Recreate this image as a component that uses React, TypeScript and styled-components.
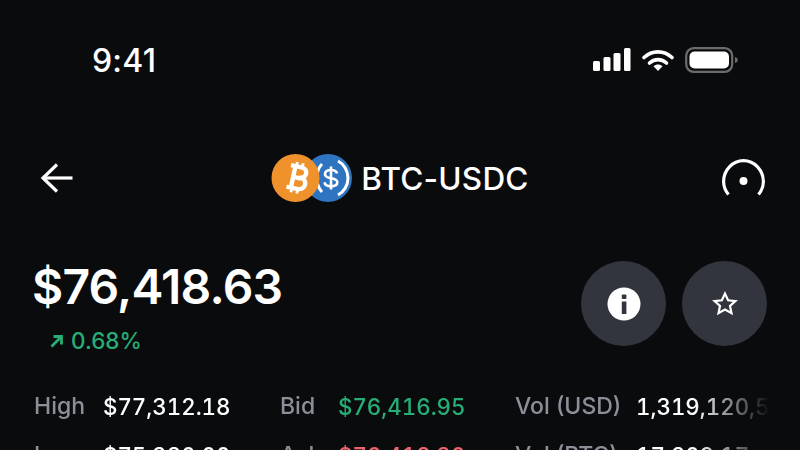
import { Fragment } from "react";
import styled, { createGlobalStyle } from "styled-components";

const GlobalStyle = createGlobalStyle`
  html, body {
    margin: 0;
    padding: 0;
    width: 800px;
    height: 450px;
    overflow: hidden;
    background: #0a0b0d;
    font-family: Inter, "Liberation Sans", sans-serif;
  }
`;

const Screen = styled.div`
  width: 800px;
  height: 450px;
  overflow: hidden;
  background: #0a0b0d;
  color: #ffffff;
  display: flex;
  flex-direction: column;
  & > * {
    flex-shrink: 0;
  }
`;

const StatusBar = styled.div`
  height: 40px;
  margin-top: 40px;
  padding: 0 62px 0 92px;
  display: flex;
  justify-content: space-between;
  align-items: center;
`;

const Clock = styled.span`
  font-size: 32px;
  font-weight: 500;
  letter-spacing: 0.2px;
`;

const StatusIcons = styled.div`
  display: flex;
  align-items: center;
  gap: 11px;
`;

const NavBar = styled.div`
  height: 60px;
  margin-top: 68px;
  padding: 0 35px 0 39px;
  display: flex;
  justify-content: space-between;
  align-items: center;
`;

const Pair = styled.div`
  display: flex;
  align-items: center;
  gap: 9px;
  margin-left: 5px;
`;

const PairLogos = styled.div`
  display: flex;
  align-items: center;
`;

const PairName = styled.span`
  font-size: 31.5px;
  font-weight: 500;
  letter-spacing: 0.2px;
`;

const PriceRow = styled.div`
  margin-top: 53px;
  padding: 0 33px 0 32px;
  display: flex;
  justify-content: space-between;
  align-items: flex-start;
`;

const PriceBlock = styled.div`
  display: flex;
  flex-direction: column;
`;

const Price = styled.div`
  font-size: 48px;
  line-height: 52px;
  font-weight: 600;
  letter-spacing: -0.8px;
`;

const Change = styled.div`
  margin-top: 15px;
  margin-left: 18px;
  display: flex;
  align-items: center;
  gap: 7px;
  color: #27ad75;
  font-size: 22.5px;
  line-height: 26px;
  font-weight: 500;
`;

const Actions = styled.div`
  display: flex;
  gap: 16px;
`;

const RoundButton = styled.div`
  width: 85px;
  height: 85px;
  border-radius: 50%;
  background: #32353d;
  display: flex;
  align-items: center;
  justify-content: center;
`;

const Stats = styled.div`
  margin-top: 38px;
  margin-left: 34px;
  width: 734px;
  display: grid;
  grid-template-columns: 69px 177px 58px 177px 121px 1fr;
  row-gap: 20px;
  line-height: 29px;
  font-weight: 500;
  white-space: nowrap;
  -webkit-mask-image: linear-gradient(to right, #000 660px, transparent 736px);
  mask-image: linear-gradient(to right, #000 660px, transparent 736px);
`;

const StatLabel = styled.span`
  color: #8a8f98;
  font-size: 23px;
`;

const StatValue = styled.span<{ $tone?: "up" | "down" }>`
  overflow: hidden;
  font-size: 22.3px;
  font-variant-numeric: tabular-nums;
  color: ${(p) =>
    p.$tone === "up" ? "#27ad75" : p.$tone === "down" ? "#f0616d" : "#ffffff"};
`;

const stats: { label: string; value: string; tone?: "up" | "down" }[] = [
  { label: "High", value: "$77,312.18" },
  { label: "Bid", value: "$76,416.95", tone: "up" },
  { label: "Vol (USD)", value: "1,319,120,5" },
  { label: "Low", value: "$75,380.00" },
  { label: "Ask", value: "$76,418.30", tone: "down" },
  { label: "Vol (BTC)", value: "17,209.17" },
];

function SignalIcon() {
  return (
    <svg width="38" height="24" viewBox="0 0 38 24" fill="#fff">
      <rect x="0" y="13" width="7" height="10" rx="1.5" />
      <rect x="10.5" y="9" width="7" height="14" rx="1.5" />
      <rect x="20.5" y="5" width="7" height="18" rx="1.5" />
      <rect x="31" y="0" width="6.5" height="23" rx="1.5" />
    </svg>
  );
}

function WifiIcon() {
  return (
    <svg width="32" height="24" viewBox="0 0 32 24" fill="none">
      <path d="M2 9.5C10 2 22 2 30 9.5" stroke="#fff" strokeWidth="3.6" strokeLinecap="round" />
      <path d="M7.5 15C12.5 10.5 19.5 10.5 24.5 15" stroke="#fff" strokeWidth="3.6" strokeLinecap="round" />
      <path d="M11.5 18.2C14.3 16 17.7 16 20.5 18.2L16 23Z" fill="#fff" />
    </svg>
  );
}

function BatteryIcon() {
  return (
    <svg width="53" height="26" viewBox="0 0 53 26" fill="none">
      <rect x="1.2" y="1.2" width="46" height="23.6" rx="7.5" stroke="#6b6c6e" strokeWidth="2.2" />
      <rect x="4.5" y="4.5" width="39.5" height="17" rx="5" fill="#fff" />
      <path d="M50 10C52 10.6 52.8 11.8 52.8 13C52.8 14.2 52 15.4 50 16Z" fill="#6b6c6e" />
    </svg>
  );
}

function BackArrow() {
  return (
    <svg width="34" height="30" viewBox="0 0 34 30" fill="none" stroke="#fff" strokeWidth="3.2">
      <path d="M33.5 15H4" />
      <path d="M18 1.5L4 15L18 28.5" />
    </svg>
  );
}

function GaugeIcon() {
  return (
    <svg width="43" height="38" viewBox="0 0 43 38" fill="none">
      <path d="M6.5 35.5C3.5 31.8 1.6 27.4 1.6 22.4C1.6 11.2 10.5 1.6 21.5 1.6C32.5 1.6 41.4 11.2 41.4 22.4C41.4 27.4 39.5 31.8 36.5 35.5" stroke="#fff" strokeWidth="3.2" />
      <circle cx="21.5" cy="22" r="4" fill="#fff" />
    </svg>
  );
}

function PairLogo() {
  return (
    <PairLogos>
      <svg width="81" height="50" viewBox="0 0 81 50">
        <circle cx="57" cy="25" r="24" fill="#2e74c0" />
        <path d="M51 11C47 15 46 20 46 25C46 30 47 35 51 39" stroke="#fff" strokeWidth="3" fill="none" />
        <path d="M67 8C73 11 77 18 77 25C77 32 73 39 67 42" stroke="#fff" strokeWidth="3" fill="none" />
        <g transform="translate(2.5 0)">
          <path d="M63.5 20.5C63 18 60.5 17 57.5 17C54 17 51.5 18.6 51.5 21.2C51.5 27 63.8 23.6 63.8 29.2C63.8 31.8 61 33.2 57.5 33.2C54 33.2 51.4 31.8 51 29.2" stroke="#fff" strokeWidth="2.6" fill="none" />
          <path d="M57.5 13.5V36.5" stroke="#fff" strokeWidth="2.6" />
        </g>
        <circle cx="24.5" cy="25" r="24" fill="#f0922c" />
        <g transform="rotate(12 25 25)">
          <path d="M17.5 13.5H28C32 13.5 34 15.8 34 18.6C34 21 32.6 22.8 30.2 23.6C33.2 24.2 35.2 26.4 35.2 29.4C35.2 33 32.6 35.5 28 35.5H17.5" fill="none" stroke="#fff" strokeWidth="4.4" />
          <path d="M22 13.5V35.5M21 24.5H30" stroke="#fff" strokeWidth="4.4" />
          <path d="M23 9V14M29 9V14M23 35V40M29 35V40" stroke="#fff" strokeWidth="2.8" />
        </g>
      </svg>
    </PairLogos>
  );
}

function InfoIcon() {
  return (
    <svg width="34" height="34" viewBox="0 0 34 34">
      <circle cx="17" cy="17" r="16.5" fill="#fff" />
      <rect x="14.8" y="7.5" width="4.6" height="4.6" rx="1" fill="#32353d" />
      <rect x="14.8" y="14.5" width="4.6" height="12.5" fill="#32353d" />
    </svg>
  );
}

function StarIcon() {
  return (
    <svg width="26" height="25" viewBox="0 0 26 25" fill="none">
      <path d="M13 2.6L16.1 9.3L23.4 10.1L18 15L19.5 22.2L13 18.6L6.5 22.2L8 15L2.6 10.1L9.9 9.3Z" stroke="#fff" strokeWidth="2.2" />
    </svg>
  );
}

function TrendArrow() {
  return (
    <svg width="14" height="14" viewBox="0 0 14 14" fill="none" stroke="#27ad75" strokeWidth="2.8">
      <path d="M1.5 12.5L11.5 2.5M3.5 2.5H11.5V10.5" />
    </svg>
  );
}

export default function App() {
  return (
    <Screen>
      <GlobalStyle />
      <StatusBar>
        <Clock>9:41</Clock>
        <StatusIcons>
          <SignalIcon />
          <WifiIcon />
          <BatteryIcon />
        </StatusIcons>
      </StatusBar>
      <NavBar>
        <BackArrow />
        <Pair>
          <PairLogo />
          <PairName>BTC-USDC</PairName>
        </Pair>
        <GaugeIcon />
      </NavBar>
      <PriceRow>
        <PriceBlock>
          <Price>$76,418.63</Price>
          <Change>
            <TrendArrow />
            0.68%
          </Change>
        </PriceBlock>
        <Actions>
          <RoundButton>
            <InfoIcon />
          </RoundButton>
          <RoundButton>
            <StarIcon />
          </RoundButton>
        </Actions>
      </PriceRow>
      <Stats>
        {stats.map((s) => (
          <Fragment key={s.label}>
            <StatLabel>{s.label}</StatLabel>
            <StatValue $tone={s.tone}>{s.value}</StatValue>
          </Fragment>
        ))}
      </Stats>
    </Screen>
  );
}
